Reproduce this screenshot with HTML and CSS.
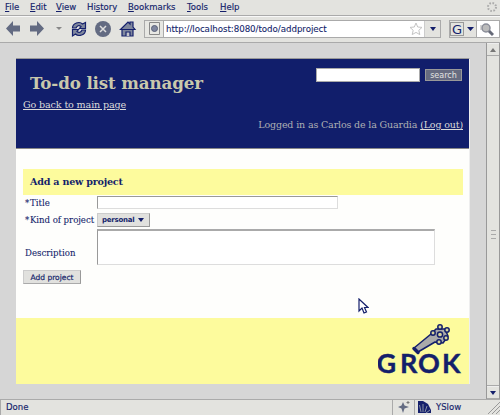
FILE: index.html
```html
<!DOCTYPE html>
<html lang="en">
<head>
<meta charset="utf-8">
<title>To-do list manager</title>
<link rel="stylesheet" href="styles.css">
</head>
<body>
<nav class="menubar">
  <span><u>F</u>ile</span><span><u>E</u>dit</span><span><u>V</u>iew</span><span>Hi<u>s</u>tory</span><span><u>B</u>ookmarks</span><span><u>T</u>ools</span><span><u>H</u>elp</span>
  <svg class="throbber" width="12" height="12" viewBox="0 0 12 12"><circle cx="6" cy="6" r="4" fill="none" stroke="#aaa" stroke-width="2" stroke-dasharray="1.6 1.54"/></svg>
</nav>
<div class="toolbar">
  <svg class="tools" width="144" height="26" viewBox="0 0 144 26">
    <g fill="#636b82">
      <path d="M6 11.500L13 4v4.500h7v6h-7V19z"/>
      <path d="M44 11.500L37 4v4.500h-7v6h7V19z"/>
      <path d="M56 10h6l-3 3z" fill="#888"/>
      <circle cx="103" cy="12" r="8"/>
    </g>
    <path d="M100 9l6 6m0-6l-6 6" stroke="#ddd" stroke-width="1.500"/>
    <g fill="#7f879d" stroke="#15206c" stroke-width="1.200">
      <path d="M72.500 11c0-5 7-7 10-4l3-1.500v6h-6l1.500-2c-2-1.500-4-1-5 1.500z"/>
      <path d="M85.500 13c0 5-7 7-10 4l-3 2v-6.500h6l-1.500 2c2 1.500 4 1 5-1.500z"/>
      <path d="M122 12.500V19h11v-6.500z"/>
      <path d="M120.500 12.500L128 5l2 2V5h3v5l2 2.500z"/>
      <path d="M126 19v-4h4v4" fill="#c4c5ca"/>
    </g>
  </svg>
  <div class="address">
    <div class="site"><svg width="13" height="15" viewBox="0 0 13 15"><path d="M1.500 1.500h10v12h-10z" fill="#e8e8e4" stroke="#888"/><circle cx="6.500" cy="7.500" r="3" fill="#8087a0" stroke="#596078"/></svg></div>
    <div class="url">http://localhost:8080/todo/addproject</div>
    <svg class="star" width="14" height="14" viewBox="0 0 14 14"><path d="M7 1l1.700 4 4.300.4-3.200 2.900 1 4.300L7 10.400l-3.800 2.200 1-4.300L1 5.400 5.300 5z" fill="#fff" stroke="#c4c4c4"/></svg>
    <div class="drop"><svg width="6" height="4"><path d="M0 0h6L3 4z" fill="#141f6b"/></svg></div>
  </div>
  <div class="engine"><b>G</b><svg width="7" height="4"><path d="M0 0h7L3.500 4z" fill="#141f6b"/></svg></div>
  <div class="find"><svg width="17" height="17" viewBox="0 0 17 17"><circle cx="9" cy="7" r="4" fill="#bbb" stroke="#8a8d98" stroke-width="1.500"/><path d="M12 10l4 4" stroke="#666a78" stroke-width="3"/><path d="M4 9V4" stroke="#aaa"/></svg></div>
</div>
<div class="viewport">
  <main class="page">
    <header class="header">
      <div class="brand">
        <h1>To-do list manager</h1>
        <a class="back">Go back to main page</a>
      </div>
      <div class="account">
        <form class="search"><input type="text" aria-label="Search"><button type="button">search</button></form>
        <p class="login">Logged in as Carlos de la Guardia <a>(Log out)</a></p>
      </div>
    </header>
    <section class="content">
      <h2>Add a new project</h2>
      <div class="row title"><label><i>*</i>Title</label><input type="text" aria-label="Title"></div>
      <div class="row kind"><label><i>*</i>Kind of project</label><button type="button" class="select">personal<svg width="6" height="4"><path d="M0 0h6L3 4z" fill="#141f6b"/></svg></button></div>
      <div class="row description"><label>Description</label><textarea aria-label="Description"></textarea></div>
      <button type="button" class="add">Add project</button>
    </section>
    <footer class="footer">
      <svg width="91" height="60" viewBox="0 0 91 60">
        <path d="M36 27L53 13l5-5 9 0 3 7-5 7-8-1-17 10z" fill="#aaa" stroke="#141f6b" stroke-width="1.500" stroke-linejoin="round"/>
        <path d="M36 27.500l4 4" stroke="#141f6b" stroke-width="3.500" stroke-linecap="round"/>
        <g fill="#d8d59b" stroke="#141f6b" stroke-width="1.500"><circle cx="55" cy="12" r="2.200"/><circle cx="62" cy="6" r="2.200"/><circle cx="69" cy="9" r="2.200"/><circle cx="68" cy="17" r="2.200"/><circle cx="61" cy="21" r="2.200"/><circle cx="62" cy="13.500" r="2.600"/></g>
        <text x="-1.500 22 40 64" y="51.500" class="logo">GROK</text>
      </svg>
    </footer>
  </main>
  <div class="scrollbar">
    <div class="arrow"><svg width="6" height="4"><path d="M0 4h6L3 0z" fill="#777"/></svg></div>
    <div class="thumb"><i></i><i></i><i></i></div>
    <div class="arrow"><svg width="6" height="4"><path d="M0 0h6L3 4z" fill="#141f6b"/></svg></div>
  </div>
  <svg class="cursor" width="11" height="17" viewBox="0 0 11 17"><path d="M1 1v12l3-3 2 5 2.500-1-2-4.500H10z" fill="#fff" stroke="#141f6b" stroke-width="1.200"/></svg>
</div>
<div class="statusbar">
  <div class="message">Done</div>
  <div class="spark"><svg width="14" height="14" viewBox="0 0 14 14"><path d="M6 2l1.500 3.500L12 7 7.500 8.500 6 13 4.500 8.500 1 7l3.500-1.500z" fill="#636b82"/><path d="M11 1v3M9.500 2.500h3" stroke="#777"/></svg></div>
  <div class="yslow"><svg width="13" height="12" viewBox="0 0 13 12"><path d="M0 0h5l5 3 3 6v3H0z" fill="#15206c"/><path d="M3 11L1.500 4M5 11L5 3M7 11l2-6M8 12l4-3" stroke="#8990a5"/></svg>YSlow</div>
  <svg class="grip" width="13" height="15" viewBox="0 0 13 15"><path d="M1 14L13 2M5 14l8-8M9 14l4-4" stroke="#999"/></svg>
</div>
</body>
</html>
```
FILE: styles.css
```css
* { box-sizing: border-box; }
body {
  margin: 0; width: 500px; height: 415px; overflow: hidden;
  display: flex; flex-direction: column;
  background: #e3e3df; color: #141f6b;
  font: 8.500px/12px "DejaVu Sans", sans-serif;
}
svg { display: block; flex: none; }
h1, h2, p { margin: 0; }
input, textarea, button { display: block; margin: 0; padding: 0; border-radius: 0; font: inherit; color: inherit; }
.menubar {
  height: 16px; flex: none; position: relative; padding: 1px 0 0 5px;
  display: grid; grid-template-columns: 25px 26px 31px 41px 59px 33px 30px;
  border-bottom: 1px solid #aaa; -webkit-text-stroke: .15px #141f6b;
}
.throbber { position: absolute; right: 2px; top: 1px; }
.toolbar { height: 27px; flex: none; display: flex; border-top: 1px solid #f8f8f8; border-bottom: 1px solid #aaa; }
.address { width: 297px; height: 18px; margin-top: 3px; display: flex; align-items: center; background: #fff; border: 1px solid #aaa; }
.site { width: 19px; height: 16px; padding-left: 3px; background: #e7e7e3; border-right: 1px solid #aaa; }
.url { flex: 1; padding-left: 2px; white-space: nowrap; font-size: 8.700px; letter-spacing: -.05px; -webkit-text-stroke: .1px #141f6b; }
.star { margin-right: 1px; }
.drop { width: 16px; height: 16px; display: grid; place-items: center; background: #e3e3df; border-left: 1px solid #ccc; }
.engine { width: 28px; height: 18px; margin: 3px 0 0 8px; display: flex; align-items: center; gap: 3px; border: 1px solid #aaa; }
.engine b { width: 14px; height: 14px; border: 1px solid #999; text-align: center; font: 13px/13px "DejaVu Sans", sans-serif; }
.find { flex: 1; height: 18px; margin-top: 3px; background: #fff; border: 1px solid #aaa; border-left: 0; }
.viewport { height: 356px; flex: none; position: relative; display: flex; justify-content: space-between; background: #d6d6d6; }
.page { width: 454px; height: 326px; margin: 15px 0 0 16px; display: flex; flex-direction: column; background: #fefefc; font-family: "DejaVu Serif", serif; border-top: 1px solid #999; border-right: 1px solid #eee; }
.header { height: 90px; flex: none; display: flex; justify-content: space-between; padding: 0 7px; background: #111e6b; color: #aeb0b3; border-bottom: 1px solid #888; }
.brand { padding-top: 12px; }
h1 { padding-left: 7px; font-size: 16.700px; line-height: 24px; letter-spacing: -.13px; color: #c9c8ac; white-space: nowrap; }
.header a { text-decoration: underline; color: #dcdcda; }
.back { display: block; margin-top: 4px; font-size: 9.600px; letter-spacing: -.15px; white-space: nowrap; }
.account { display: flex; flex-direction: column; align-items: flex-end; padding-top: 9px; }
.search { display: flex; align-items: center; gap: 5px; }
.search input { width: 104px; height: 14px; background: #fff; border: 1px solid #aaa; }
.search button { width: 37px; height: 12px; border: 1px solid #999; background: #666b80; color: #e3e3e0; font: 8px/9px "DejaVu Sans", sans-serif; }
.login { margin: 37px -1px 0 0; font-size: 9.500px; letter-spacing: -.15px; white-space: nowrap; }
.content { height: 169px; flex: none; padding: 20px 6px 0 7px; }
h2 { height: 26px; padding-left: 7px; font-size: 9.600px; letter-spacing: -.22px; line-height: 25px; background: #fdfb9d; }
.row { display: grid; grid-template-columns: 74px auto; justify-content: start; align-items: center; }
.row label { padding-left: 2px; white-space: nowrap; font-size: 8.600px; -webkit-text-stroke: .1px #141f6b; }
.row i { display: inline-block; width: 5px; font-style: normal; }
.title { height: 15px; }
.title input { width: 241px; height: 13px; background: #fff; border: 1px solid #ddd; border-top-color: #999; border-left-color: #999; }
.kind { height: 19px; }
.kind label { letter-spacing: -.05px; }
.select { width: 53px; height: 14px; display: flex; align-items: center; justify-content: space-between; padding: 0 5px 0 4px; border: 1px solid #ccc; border-right-color: #999; border-bottom-color: #999; background: #e1e1de; font: bold 7px/12px "DejaVu Sans", sans-serif; letter-spacing: -.25px; }
.description { height: 36px; }
.description label { padding-top: 11px; }
.description textarea { width: 338px; height: 36px; resize: none; background: #fff; border: 1px solid #ddd; border-top: 2px solid #aaa; border-left-color: #999; }
.add { width: 58px; height: 14px; margin-top: 5px; border: 1px solid #ccc; border-right-color: #999; border-bottom-color: #aaa; background: #e1e1de; font: 7.500px/11px "DejaVu Sans", sans-serif; -webkit-text-stroke: .2px #141f6b; }
.footer { flex: 1; display: flex; justify-content: flex-end; padding-top: 3px; background: #fdfb9d; }
.logo { font: 700 27px Lato, sans-serif; fill: #141f6b; stroke: #141f6b; stroke-width: .4px; }
.scrollbar { width: 14px; display: flex; flex-direction: column; border: solid #999; border-width: 0 1px; background: #e3e3df; }
.arrow { height: 13px; display: grid; place-items: center; border-bottom: 1px solid #aaa; border-top: 1px solid #eee; }
.thumb { flex: 1; display: flex; flex-direction: column; align-items: center; justify-content: center; gap: 3px; padding-top: 28px; border-bottom: 1px solid #aaa; }
.thumb i { width: 5px; height: 1px; background: #aaa; }
.cursor { position: absolute; left: 358px; top: 255px; }
.statusbar { flex: 1; display: flex; border-top: 1px solid #aaa; }
.statusbar > div { border-left: 1px solid #aaa; }
.message { width: 392px; padding: 1px 0 0 5px; -webkit-text-stroke: .15px #141f6b; }
.spark { width: 22px; padding-left: 4px; }
.yslow { flex: 1; display: flex; gap: 5px; padding: 1px 0 0 3px; -webkit-text-stroke: .15px #141f6b; }
```
